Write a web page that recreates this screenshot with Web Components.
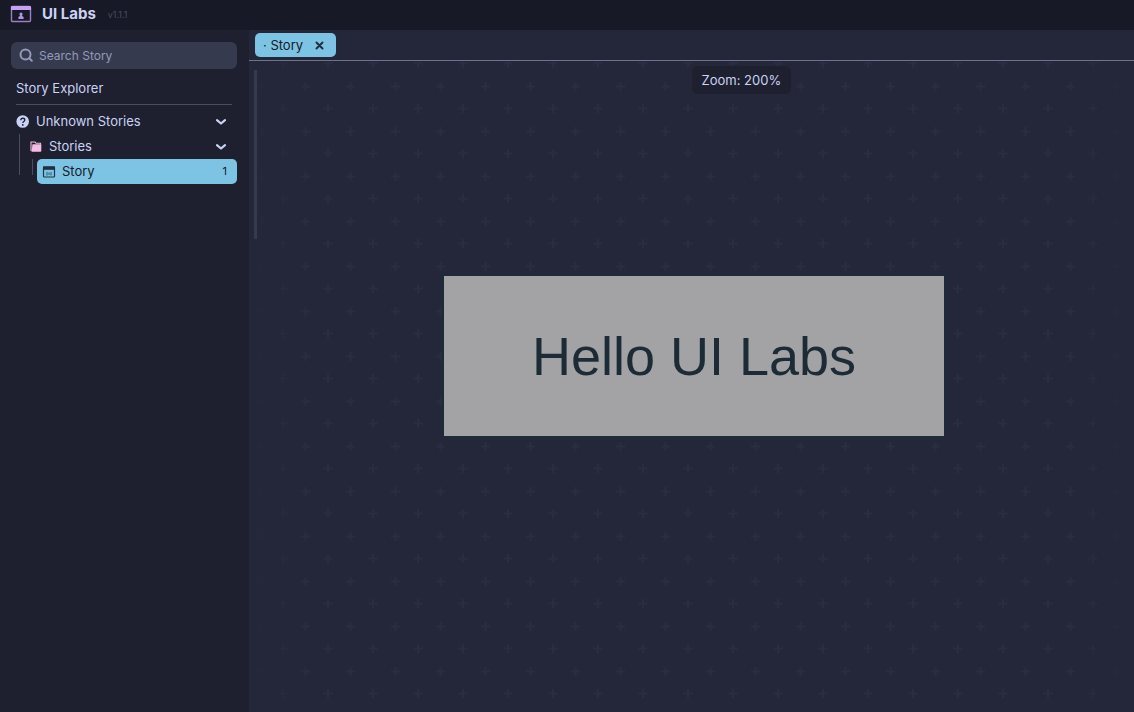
<!DOCTYPE html>
<html lang="en">
<head>
<meta charset="utf-8">
<title>UI Labs</title>
<style>
  :root {
    --crust: #181926;
    --mantle: #1e202f;
    --base: #24273a;
    --surface: #363a4f;
    --line: #6e738d;
    --text: #cad3f5;
    --accent: #7dc4e4;
  }
  html, body { height: 100%; margin: 0; }
  body { background: var(--base); color: var(--text); font: 13px/25px Inter, "Open Sans", sans-serif; }
</style>
</head>
<body>
<labs-app></labs-app>
<script>
const define = (name, markup) => {
  const template = document.createElement('template');
  template.innerHTML = markup;
  customElements.define(name, class extends HTMLElement {
    constructor() {
      super();
      this.attachShadow({ mode: 'open' }).append(template.content.cloneNode(true));
    }
  });
};

define('labs-header', `
  <style>
    :host { display: flex; align-items: center; box-sizing: border-box; height: 30px; padding: 0 10px 2px; background: var(--crust); }
    svg { margin-right: 10px; }
    h1 { margin: 0 12px 0 0; font-size: 15px; line-height: 28px; font-weight: 700; }
    small { font-size: 9px; color: #494d64; }
  </style>
  <svg width="22" height="18" viewBox="0 0 22 18" aria-hidden="true">
    <rect x="1.5" y="1.5" width="19" height="15" rx="1" fill="none" stroke="#9a7fc4" stroke-width="1.4"/>
    <path d="M1 2a1 1 0 0 1 1-1h18a1 1 0 0 1 1 1v3H1z" fill="#c6a0f6"/>
    <circle cx="11" cy="9" r="1.6" fill="#b491e0"/>
    <path d="M10.200 9h1.600l.3 2 1.500 1v2H8.400v-2l1.500-1z" fill="#b491e0"/>
  </svg>
  <h1>UI Labs</h1><small>v1.1.1</small>`);

define('search-box', `
  <style>
    :host { display: block; }
    label { display: flex; align-items: center; height: 27px; padding: 0 8px; gap: 5px; border-radius: 6px; background: var(--surface); }
    input { flex: 1; min-width: 0; padding: 0; border: 0; outline: 0; background: none; color: var(--text); font: inherit; font-size: 12px; line-height: 27px; }
    input::placeholder { color: #939ab7; opacity: 1; }
  </style>
  <label>
    <svg width="15" height="15" viewBox="0 0 15 15" fill="none" stroke="#939ab7" stroke-width="2" stroke-linecap="round" aria-hidden="true">
      <circle cx="6.500" cy="6.500" r="5"/><path d="M10.300 10.300l2.500 2.500"/>
    </svg>
    <input type="text" placeholder="Search Story" aria-label="Search Story">
  </label>`);

define('tree-row', `
  <style>
    :host { display: block; }
    button { display: flex; align-items: center; gap: 6px; width: 100%; height: 25px; padding: 0 10px 0 5px; border: 0; border-radius: 5px; background: none; color: inherit; font: inherit; text-align: left; }
    :host([selected]) button { background: var(--accent); color: var(--crust); }
    .label { flex: 1; }
  </style>
  <button type="button"><slot name="icon"></slot><span class="label"><slot></slot></span><slot name="end"></slot></button>`);

define('tree-chevron', `
  <style>:host, svg { display: block; }</style>
  <svg width="12" height="8" viewBox="0 0 12 8" fill="none" stroke="#cad3f5" stroke-width="2.200" stroke-linecap="round" stroke-linejoin="round" aria-hidden="true"><path d="M2 2.200l4 3.300 4-3.300"/></svg>`);

define('labs-sidebar', `
  <style>
    :host { display: block; padding: 12px 12px 12px 11px; background: var(--mantle); }
    h2 { margin: 7px 5px 4px; padding-bottom: 3px; border-bottom: 1px solid #494d64; font-size: 13px; line-height: 25px; font-weight: 400; }
    .branch, .leaf { margin-left: 8px; padding-left: 5px; background: linear-gradient(#494d64, #494d64) 0 0 / 1px 41px no-repeat; }
    .leaf { background-size: 1px 16px; }
    svg { display: block; }
    .count { font-size: 11px; }
  </style>
  <search-box></search-box>
  <h2>Story Explorer</h2>
  <tree-row>
    <svg slot="icon" width="14" height="14" viewBox="0 0 14 14" aria-hidden="true">
      <circle cx="6.700" cy="6.500" r="6.300" fill="#cad3f5"/>
      <path d="M4.800 5.200c0-2.700 4-2.500 4-.2 0 1.500-2 1.400-2 2.900" fill="none" stroke="#1e2030" stroke-width="1.300"/>
      <circle cx="6.800" cy="9.900" r=".9" fill="#1e2030"/>
    </svg>
    Unknown Stories<tree-chevron slot="end"></tree-chevron>
  </tree-row>
  <div class="branch">
    <tree-row>
      <svg slot="icon" width="14" height="14" viewBox="0 0 14 14" aria-hidden="true">
        <path d="M2 11V2h4l1 1.300h4.500V4.500" fill="none" stroke="#f5bde6" stroke-width="1.100"/>
        <path d="M3.500 4.300H12.300v6.500a1 1 0 0 1-1 1H2.500z" fill="#f5bde6"/>
      </svg>
      Stories<tree-chevron slot="end"></tree-chevron>
    </tree-row>
    <div class="leaf">
      <tree-row selected>
        <svg slot="icon" width="14" height="14" viewBox="0 0 14 14" aria-hidden="true">
          <rect x="1.500" y="2" width="11" height="10" rx=".8" fill="none" stroke="#1e3545" stroke-width="1.200"/>
          <path d="M1 1.400h12v3.400H1z" fill="#1e2f40"/>
          <path d="M5 7v3.500M9 7v3.500M7 7.500v2.500" fill="none" stroke="#31566a"/>
        </svg>
        Story<span slot="end" class="count">1</span>
      </tree-row>
    </div>
  </div>`);

define('story-tabs', `
  <style>
    :host { display: flex; height: 27px; padding: 3px 6px 0; border-bottom: 1px solid var(--line); }
    .tab { display: flex; align-items: center; height: 24px; padding: 0 10px 0 8px; gap: 10px; border-radius: 5px; background: var(--accent); color: var(--crust); }
    button { display: flex; padding: 0; border: 0; background: none; color: inherit; font: inherit; }
    .close { padding: 1px; }
  </style>
  <div class="tab">
    <button type="button">· Story</button>
    <button type="button" class="close" aria-label="Close Story">
      <svg width="11" height="11" viewBox="0 0 11 11" stroke="#1e3040" stroke-width="2" stroke-linecap="round" aria-hidden="true"><path d="M2.500 2.500l6 6M8.500 2.500l-6 6"/></svg>
    </button>
  </div>`);

define('story-canvas', `
  <style>
    :host { display: grid; position: relative; overflow: hidden; place-items: center; }
    .grid { position: absolute; inset: 0; width: 100%; height: 100%; }
    .scroll { position: absolute; left: 5px; top: 9px; width: 3px; height: 26%; background: var(--surface); }
    output { position: absolute; left: 50%; top: 5px; padding: 1px 10px; border-radius: 6px; background: var(--mantle); line-height: 26px; }
    .story { position: relative; box-sizing: border-box; width: 500px; max-width: 80%; margin: 0 0 61px 5px; padding: 48px 20px; background: #a3a3a5; outline: 2px solid #1d2b38; color: #1c2b36; text-align: center; font: 54px/64px "Liberation Sans", Arial, sans-serif; }
  </style>
  <svg class="grid" aria-hidden="true">
    <defs>
      <pattern id="plus" width="45" height="45" patternUnits="userSpaceOnUse">
        <path d="M11.500 21v9M7 25.500h9M34 -2v9M29.500 2.500h9M34 43v9" stroke="#2a2d41" stroke-width="2" fill="none"/>
      </pattern>
      <linearGradient id="fade"><stop offset="0" stop-color="#24273a"/><stop offset=".07" stop-color="#24273a" stop-opacity="0"/><stop offset=".93" stop-color="#24273a" stop-opacity="0"/><stop offset="1" stop-color="#24273a"/></linearGradient>
    </defs>
    <rect width="100%" height="100%" fill="url(#plus)"/>
    <rect width="100%" height="100%" fill="url(#fade)"/>
  </svg>
  <div class="scroll"></div>
  <output>Zoom: 200%</output>
  <div class="story">Hello UI Labs</div>`);

define('labs-app', `
  <style>
    :host { display: grid; grid-template: auto 1fr / 249px 1fr; min-height: 100%; }
    labs-header { grid-column: 1 / -1; }
    main { display: grid; grid-template-rows: auto 1fr; min-width: 0; }
  </style>
  <labs-header></labs-header>
  <labs-sidebar></labs-sidebar>
  <main><story-tabs></story-tabs><story-canvas></story-canvas></main>`);
</script>
</body>
</html>
